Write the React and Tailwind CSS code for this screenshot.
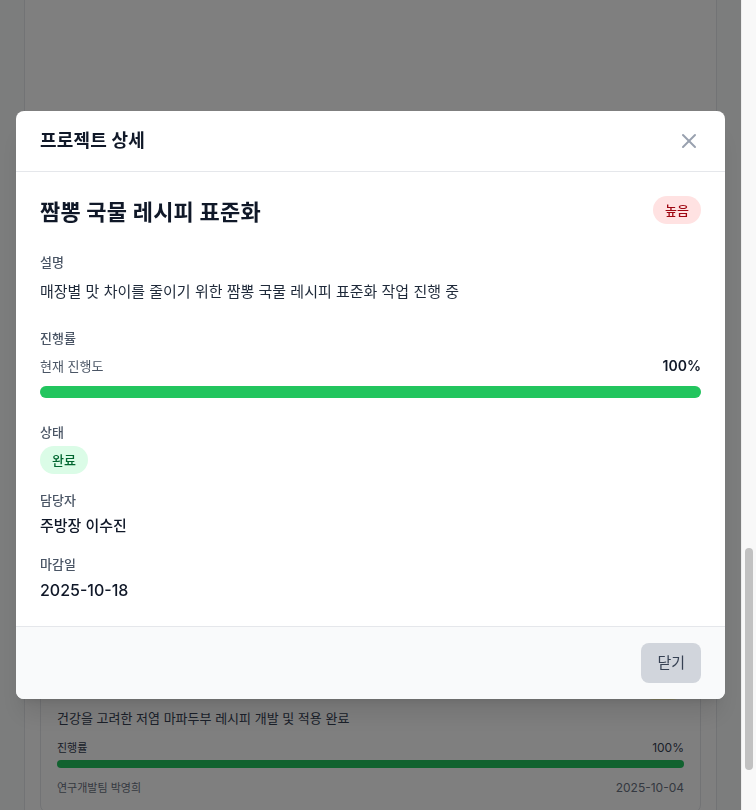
import { useEffect, useRef } from "react";
import { X } from "lucide-react";
import clsx from "clsx";

const priorityStyle = {
  높음: "bg-red-100 text-red-800",
  보통: "bg-yellow-100 text-yellow-800",
  낮음: "bg-gray-100 text-gray-700",
};

const ongoing = [
  { title: "짬뽕 국물 레시피 표준화", desc: "매장별 맛 차이를 줄이기 위한 짬뽕 국물 레시피 표준화 작업 진행 중", progress: 100, owner: "주방장 이수진", due: "2025-10-18", priority: "높음" },
  { title: "탕수육 소스 리뉴얼", desc: "새콤달콤한 맛의 균형을 맞춘 소스 배합 테스트", progress: 70, owner: "조리팀 김민수", due: "2025-11-02", priority: "높음" },
  { title: "배달 포장 용기 개선", desc: "면 불어남을 줄이는 분리형 포장 용기 도입 검토", progress: 45, owner: "운영팀 정하늘", due: "2025-11-10", priority: "보통" },
  { title: "짜장 소스 원가 절감", desc: "춘장 공급처 다변화를 통한 원가 절감 방안 마련", progress: 30, owner: "구매팀 최은비", due: "2025-11-15", priority: "보통" },
  { title: "신규 세트 메뉴 구성", desc: "점심 시간대 1인 세트 메뉴 구성 및 가격 검토", progress: 55, owner: "기획팀 한지훈", due: "2025-11-20", priority: "낮음" },
  { title: "주방 위생 점검 체계화", desc: "일일 위생 점검표 도입 및 교육 자료 정비", progress: 80, owner: "품질팀 오세린", due: "2025-11-05", priority: "높음" },
  { title: "유산슬 플레이팅 개선", desc: "코스 요리용 유산슬 플레이팅 가이드 제작", progress: 20, owner: "조리팀 박서준", due: "2025-12-01", priority: "낮음" },
  { title: "식자재 재고 관리", desc: "주간 재고 회전율 기반 발주량 자동 산정", progress: 60, owner: "운영팀 윤다은", due: "2025-11-28", priority: "보통" },
  { title: "고추기름 자체 생산", desc: "매장 공용 고추기름 제조 공정 및 보관 기준 수립", progress: 40, owner: "주방장 이수진", due: "2025-12-05", priority: "보통" },
  { title: "직원 조리 교육 프로그램", desc: "신입 조리사 대상 기본 조리 교육 커리큘럼 구성", progress: 35, owner: "인사팀 서유진", due: "2025-12-10", priority: "낮음" },
];

const done = [
  { title: "군만두 반죽 배합 개선", desc: "바삭한 식감을 살린 만두피 반죽 배합 확정", progress: 100, owner: "조리팀 김민수", due: "2025-09-20", priority: "보통" },
  { title: "볶음밥 조리 시간 단축", desc: "웍 예열 기준 정립으로 조리 시간 20% 단축", progress: 100, owner: "주방장 이수진", due: "2025-09-28", priority: "낮음" },
  { title: "저염 마파두부 개발", desc: "건강을 고려한 저염 마파두부 레시피 개발 및 적용 완료", progress: 100, owner: "연구개발팀 박영희", due: "2025-10-04", priority: "보통" },
];

function ProjectCard({ p, innerRef }) {
  return (
    <div ref={innerRef} className="rounded-lg border border-gray-200 bg-white p-4">
      <div className="mb-2 flex items-start justify-between">
        <h3 className="text-[15px] leading-6 font-semibold text-gray-900">{p.title}</h3>
        <span className={clsx("rounded-full px-2.5 py-1 text-xs font-medium", priorityStyle[p.priority])}>
          {p.priority}
        </span>
      </div>
      <p className="text-[13px] leading-5 text-gray-700">{p.desc}</p>
      <div className="mt-3 flex items-center justify-between text-xs text-gray-700">
        <span className="text-[11px]">진행률</span>
        <span>{p.progress}%</span>
      </div>
      <div className="mt-1 h-2 rounded-full bg-gray-200">
        <div
          className={clsx("h-2 rounded-full", p.progress === 100 ? "bg-[#22c55e]" : "bg-blue-500")}
          style={{ width: `${p.progress}%` }}
        />
      </div>
      <div className="mt-3 flex items-center justify-between text-xs text-gray-500">
        <span className="text-[11px]">{p.owner}</span>
        <span>{p.due}</span>
      </div>
    </div>
  );
}

function Label({ children, className }) {
  return <p className={clsx("text-[13px] leading-5 font-medium text-gray-600", className)}>{children}</p>;
}

export default function App() {
  const targetRef = useRef(null);
  const p = ongoing[0];

  // put the last finished card just under the modal, like the captured scroll position
  useEffect(() => {
    const el = targetRef.current;
    if (!el) return;
    const top = el.getBoundingClientRect().top + window.scrollY;
    window.scrollTo(0, top - 659);
  }, []);

  return (
    <div className="min-h-screen bg-gray-50 pr-[15px] font-['Inter','Noto_Sans_CJK_KR',sans-serif]">
      {/* Page behind the modal */}
      <div className="mx-6 min-h-screen border-x border-gray-200 bg-white px-[15px] pt-6 pb-36">
        <div className="mb-6">
          <h1 className="text-2xl font-bold text-gray-900">주방 프로젝트 관리</h1>
          <p className="mt-1 text-sm text-gray-500">레시피 개발과 매장 운영 개선 프로젝트 현황</p>
        </div>

        <div className="mb-8 grid grid-cols-4 gap-4">
          {[
            ["전체", "13"],
            ["진행 중", "10"],
            ["완료", "3"],
            ["평균 진행률", "58%"],
          ].map(([k, v]) => (
            <div key={k} className="rounded-lg border border-gray-200 p-4">
              <p className="text-xs text-gray-500">{k}</p>
              <p className="mt-1 text-2xl font-bold text-gray-900">{v}</p>
            </div>
          ))}
        </div>

        <h2 className="mb-4 text-lg font-semibold text-gray-900">진행 중인 프로젝트</h2>
        <div className="space-y-4">
          {ongoing.map((item) => (
            <ProjectCard key={item.title} p={item} />
          ))}
        </div>

        <h2 className="mt-72 mb-4 text-lg font-semibold text-gray-900">완료된 프로젝트</h2>
        <div className="space-y-4">
          {done.map((item, i) => (
            <ProjectCard key={item.title} p={item} innerRef={i === done.length - 1 ? targetRef : undefined} />
          ))}
        </div>
      </div>

      {/* Window scrollbar */}
      <div className="fixed inset-y-0 right-0 w-[15px] border-l border-[#ededed] bg-[#f8f8f8]">
        <div className="absolute top-[548px] left-[3px] h-[222px] w-2 rounded-full bg-[#c1c1c1]" />
      </div>

      {/* Modal */}
      <div className="fixed inset-y-0 right-[15px] left-0 z-50 flex items-center justify-center bg-black/50 p-4">
        <div className="w-full max-w-3xl overflow-hidden rounded-lg bg-white shadow-xl">
          <div className="flex items-center justify-between border-b border-gray-200 px-6 py-4">
            <h2 className="text-lg font-bold tracking-[0.01em] text-gray-900">프로젝트 상세</h2>
            <button className="text-gray-400 hover:text-gray-600">
              <X size={24} strokeWidth={2} />
            </button>
          </div>

          <div className="px-6 py-6">
            <div className="mb-6 flex items-start justify-between">
              <h3 className="text-[22px] leading-8 font-bold tracking-[0.01em] text-gray-900">{p.title}</h3>
              <span className={clsx("rounded-full px-3 py-1 text-[13px] leading-5 font-medium", priorityStyle[p.priority])}>
                {p.priority}
              </span>
            </div>

            <div className="mb-6">
              <Label className="mb-2">설명</Label>
              <p className="text-[15px] leading-6 text-gray-800">{p.desc}</p>
            </div>

            <div className="mb-6">
              <Label className="mb-2">진행률</Label>
              <div className="mb-2.5 flex items-center justify-between">
                <span className="text-[13px] leading-5 text-gray-600">현재 진행도</span>
                <span className="text-sm font-semibold text-gray-900">{p.progress}%</span>
              </div>
              <div className="h-3 w-full rounded-full bg-gray-200">
                <div className="h-3 rounded-full bg-[#22c55e]" style={{ width: `${p.progress}%` }} />
              </div>
            </div>

            <div className="mb-4">
              <Label className="mb-1">상태</Label>
              <span className="inline-block rounded-full bg-green-100 px-3 py-1 text-[13px] leading-5 font-medium text-green-800">
                완료
              </span>
            </div>

            <div className="mb-4">
              <Label className="mb-1">담당자</Label>
              <p className="text-[15px] leading-6 font-medium text-gray-900">{p.owner}</p>
            </div>

            <div>
              <Label className="mb-1">마감일</Label>
              <p className="text-base font-medium text-gray-900">{p.due}</p>
            </div>
          </div>

          <div className="flex justify-end border-t border-gray-200 bg-gray-50 px-6 py-4">
            <button className="rounded-lg bg-gray-300 px-4 py-2 text-[15px] leading-6 text-gray-700 hover:bg-gray-400">
              닫기
            </button>
          </div>
        </div>
      </div>
    </div>
  );
}
